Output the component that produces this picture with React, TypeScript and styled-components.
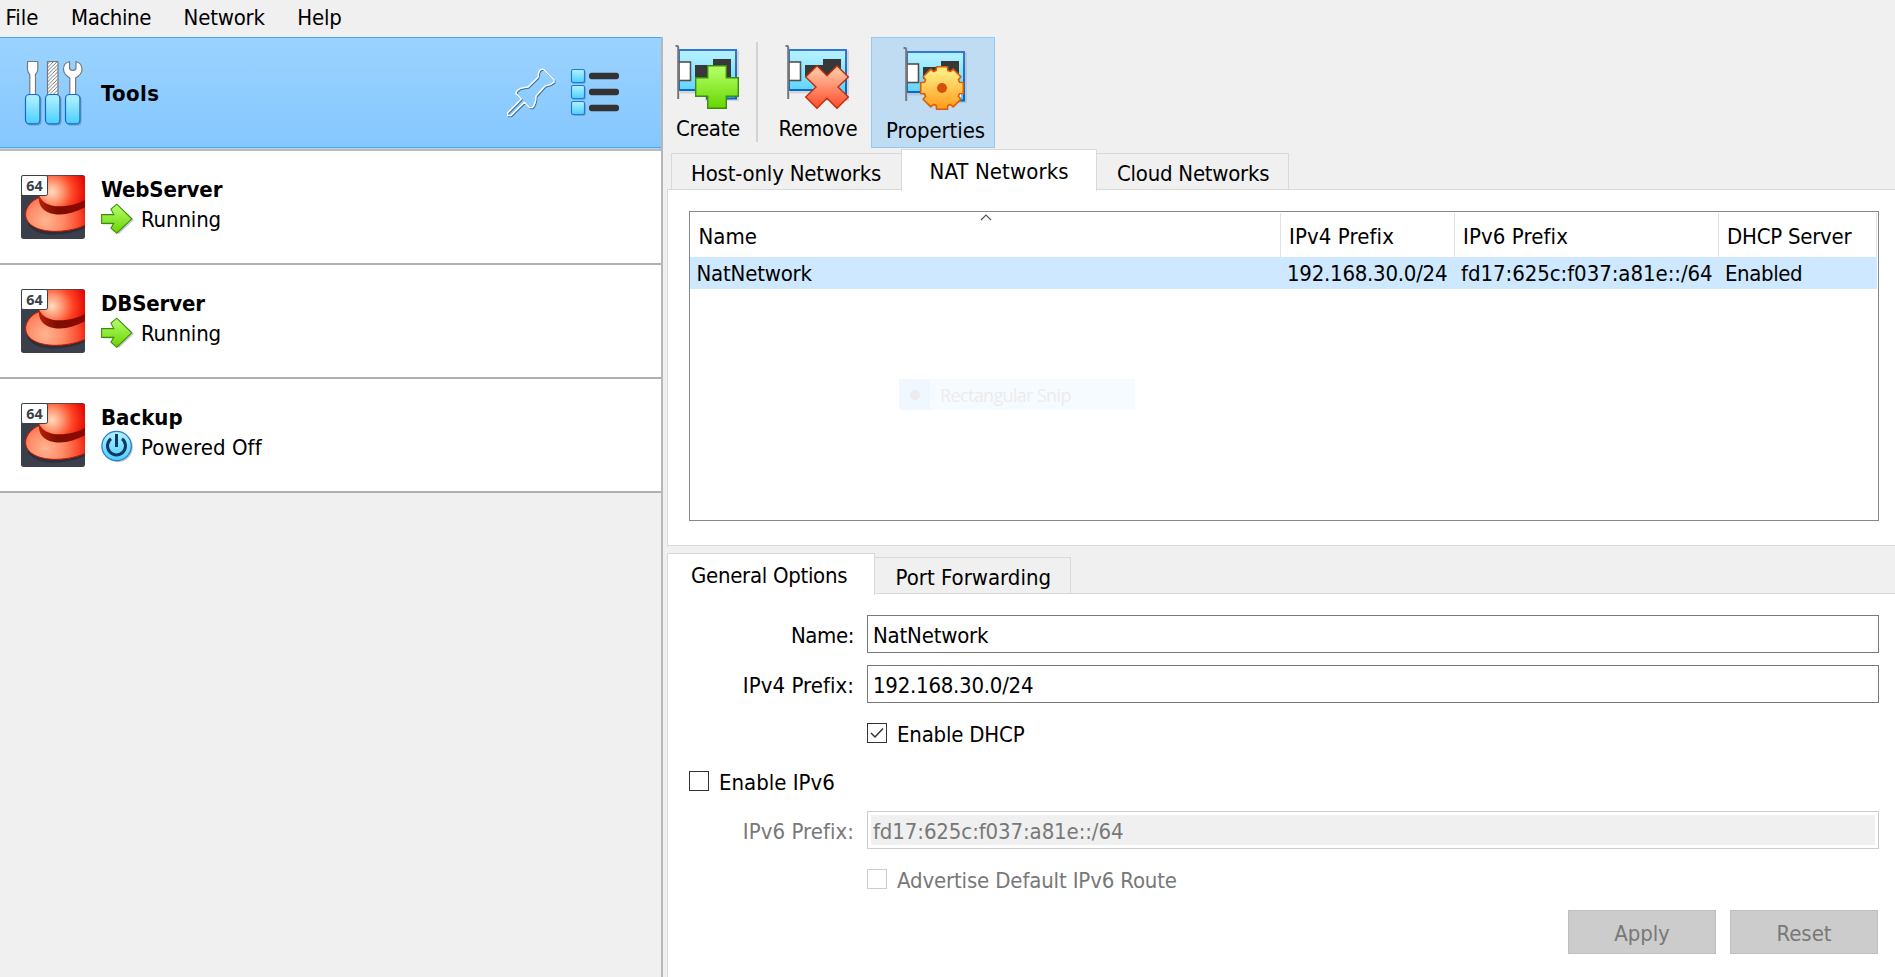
import React from "react";
import styled, { createGlobalStyle, css } from "styled-components";

const GlobalStyle = createGlobalStyle`
  * { box-sizing: border-box; }
  body {
    margin: 0;
    overflow: hidden;
    background: #f0f0f0;
    color: #000;
    font-family: "DejaVu Sans Condensed", "DejaVu Sans", sans-serif;
    font-size: 22px;
    line-height: 26px;
  }
`;

const Text = styled.span<{ $track?: number }>`
  white-space: nowrap;
  letter-spacing: ${(p) => p.$track ?? 0}px;
`;

const Window = styled.div`
  width: 1895px;
  height: 977px;
  display: flex;
  flex-direction: column;
`;

const MenuBar = styled.nav`
  display: flex;
  flex: none;
  gap: 32.5px;
  height: 37px;
  padding: 5px 0 0 5.5px;
`;

const Body = styled.div`
  display: grid;
  grid-template-columns: 661px 2px minmax(0, 1fr);
  flex: 1;
  min-height: 0;
`;

const Divider = styled.div`
  background: #b7b7b7;
`;

const Sidebar = styled.aside`
  display: flex;
  flex-direction: column;
`;

const ToolsRow = styled.div`
  display: flex;
  align-items: center;
  height: 111px;
  padding: 0 41px 0 23px;
  border: solid #46a6f6;
  border-width: 1px 0;
  background: linear-gradient(#9bd3ff, #84c7ff);
`;

const ToolsEdge = styled.div`
  height: 3px;
  border-top: 1px solid #b5d4ee;
  background: #b9b9b9;
`;

const ToolsLabel = styled(Text)`
  flex: 1;
  margin-left: 16px;
  padding-top: 2px;
  font-weight: bold;
`;

const ToolButtons = styled.div`
  display: flex;
  align-items: center;
  gap: 13px;
`;

const MachineRow = styled.div`
  display: flex;
  gap: 16px;
  height: 114px;
  padding: 24px 0 0 21px;
  background: #fff;
  border-bottom: 2px solid #b0b0b0;
`;

const MachineInfo = styled.div`
  display: flex;
  flex-direction: column;
  padding-top: 2px;
`;

const MachineName = styled(Text)`
  font-weight: bold;
  line-height: 26px;
`;

const MachineState = styled.div`
  display: flex;
  align-items: center;
  gap: 6px;
  height: 32px;
`;

const StateText = styled(Text)`
  padding-top: 2px;
`;

const Main = styled.main`
  display: flex;
  flex-direction: column;
  min-width: 0;
  padding-left: 4px;
`;

const Toolbar = styled.div`
  display: flex;
  align-items: flex-start;
  flex: none;
  height: 112px;
  padding-left: 8px;
`;

const ToolButton = styled.button<{ $width: number; $active?: boolean }>`
  display: flex;
  flex-direction: column;
  align-items: center;
  gap: 5px;
  width: ${(p) => p.$width}px;
  height: 111px;
  padding: 8px 0 0;
  border: 0;
  background: none;
  color: inherit;
  font: inherit;
  & > span {
    margin-left: 2px;
  }
  ${(p) =>
    p.$active &&
    css`
      margin-left: 14px;
      padding: 9px 0 0 3px;
      border: 1px solid #91c9f7;
      background: #c0dcf3;
    `}
`;

const ToolSeparator = styled.div`
  width: 2px;
  height: 100px;
  margin: 5px 19px 0 17px;
  background: #d2d2d2;
`;

const TabBar = styled.div<{ $indent?: number }>`
  display: flex;
  align-items: flex-end;
  flex: none;
  height: 40px;
  padding-left: ${(p) => p.$indent ?? 0}px;
`;

const Tab = styled.div<{ $width: number; $pad: number; $side?: "left" | "right"; $selected?: boolean }>`
  width: ${(p) => p.$width}px;
  height: 36px;
  padding: 7px 0 0 ${(p) => p.$pad}px;
  border: solid #d9d9d9;
  border-width: ${(p) => (p.$side === "left" ? "1px 0 0 1px" : "1px 1px 0 0")};
  ${(p) =>
    p.$selected &&
    css`
      z-index: 1;
      height: 42px;
      margin-bottom: -2px;
      padding-top: 9px;
      border-width: 1px 1px 0;
      background: #fff;
    `}
`;

const Pane = styled.section`
  border: solid #d9d9d9;
  border-width: 1px 0 1px 1px;
  background: #fff;
`;

const ListPane = styled(Pane)`
  flex: none;
  height: 357px;
  margin-bottom: 7px;
  padding: 21px 16px 0 21px;
`;

const Table = styled.div`
  position: relative;
  height: 310px;
  border: 1px solid #828790;
`;

const gridColumns = css`
  display: grid;
  grid-template-columns: 591px 174px 264px 158px;
`;

const TableHead = styled.div`
  ${gridColumns}
  height: 45px;
  padding-top: 1px;
`;

const HeadCell = styled.div<{ $pad?: number }>`
  padding: 11px 0 0 ${(p) => p.$pad ?? 8}px;
  border-right: 1px solid #e2e2e2;
`;

const TableRow = styled.div`
  ${gridColumns}
  width: 1187px;
  height: 32px;
  padding-top: 4px;
  background: #cde8ff;
`;

const Cell = styled.div<{ $pad?: number }>`
  padding-left: ${(p) => p.$pad ?? 6}px;
`;

const SortMark = styled.svg`
  position: absolute;
  left: 290px;
  top: 2px;
`;

const SnipHint = styled.div`
  position: absolute;
  left: 209px;
  top: 167px;
  display: flex;
  align-items: center;
  width: 236px;
  height: 31px;
  background: #f6fbff;
  color: #ececec;
  font: 18px "Open Sans", sans-serif;
`;

const SnipMark = styled.div`
  display: flex;
  align-items: center;
  justify-content: center;
  width: 31px;
  height: 31px;
  margin-right: 10px;
  background: #f0f7ff;
`;

const SnipDot = styled.i`
  width: 10px;
  height: 10px;
  border-radius: 50%;
  background: #ececec;
`;

const FormPane = styled(Pane)`
  flex: 1;
  padding: 21px 16px 0 21px;
  border-bottom: 0;
`;

const Form = styled.div`
  display: grid;
  grid-template-columns: 164px minmax(0, 1fr);
  grid-template-rows: 38px 38px 36px 36px 38px 36px 45px;
  gap: 12px 14px;
`;

const Label = styled.label<{ $muted?: boolean }>`
  padding: 8px 0 0;
  margin-right: -1px;
  text-align: right;
  color: ${(p) => (p.$muted ? "#787878" : "#000")};
`;

const Field = styled.div<{ $disabled?: boolean }>`
  padding: 7px 0 0 5px;
  border: 1px solid #7a7a7a;
  ${(p) =>
    p.$disabled &&
    css`
      border-color: #cccccc;
      outline: 3px solid #fff;
      outline-offset: -4px;
      background: #f0f0f0;
      color: #787878;
    `}
`;

const Check = styled.div<{ $wide?: boolean; $muted?: boolean }>`
  display: flex;
  align-items: center;
  gap: 10px;
  grid-column: ${(p) => (p.$wide ? "1 / -1" : "2")};
  color: ${(p) => (p.$muted ? "#787878" : "#000")};
`;

const CheckBox = styled.span<{ $muted?: boolean }>`
  display: flex;
  align-items: center;
  justify-content: center;
  width: 20px;
  height: 20px;
  border: 1px solid ${(p) => (p.$muted ? "#cccccc" : "#333")};
`;

const CheckText = styled(Text)`
  padding-top: 4px;
`;

const Actions = styled.div`
  display: flex;
  justify-content: flex-end;
  gap: 14px;
  grid-column: 1 / -1;
  padding: 1px 1px 0 0;
`;

const ActionButton = styled.button`
  width: 148px;
  height: 44px;
  padding: 4px 0 0;
  border: 1px solid #bfbfbf;
  background: #cccccc;
  color: #787878;
  font: inherit;
`;

function ToolsIcon() {
  return (
    <svg width="62" height="68" viewBox="23 59 62 68">
      <defs>
        <linearGradient id="handle" x1="0" y1="0" x2="0" y2="1">
          <stop offset="0.15" stopColor="#a6eeff" />
          <stop offset="1" stopColor="#4cceff" />
        </linearGradient>
        <pattern id="hatch" width="3.6" height="3.6" patternUnits="userSpaceOnUse">
          <rect width="3.6" height="3.6" fill="#fff" />
          <path d="M-1 1L1 -1M0 3.6L3.6 0M2.6 4.6L4.6 2.6" stroke="#555" strokeWidth="0.8" />
        </pattern>
      </defs>
      <g fill="#5a7d9c" opacity="0.55">
        <rect x="26.5" y="95.5" width="15" height="30" rx="4" />
        <rect x="46.5" y="95.5" width="15" height="30" rx="4" />
        <rect x="66.5" y="95.5" width="15" height="30" rx="4" />
      </g>
      <g stroke="#77797c" strokeWidth="1.2" strokeLinejoin="round">
        <path fill="#fff" d="M27.5 61.5H37.8V69.5Q37.3 73 35.5 74.5V95H29.8V74.5Q28 73 27.5 69.5Z" />
        <rect fill="url(#hatch)" x="47.5" y="61.5" width="10.5" height="34" />
        <path
          fill="#fff"
          d="M69.5 61.5Q63.3 63 63.5 69.5Q63.8 74.5 69.8 78V95H75.6V78Q81.8 74.5 82 69.5Q82 63 76 61.5V68Q75.8 70.3 72.8 70.3Q69.7 70.3 69.5 68Z"
        />
      </g>
      <g fill="url(#handle)" stroke="#1768cc" strokeWidth="1.2">
        <rect x="25.5" y="94.5" width="14.4" height="29.4" rx="4" />
        <rect x="45.5" y="94.5" width="14.4" height="29.4" rx="4" />
        <rect x="65.5" y="94.5" width="14.4" height="29.4" rx="4" />
      </g>
    </svg>
  );
}

const pinPath =
  "M83 257V248L124 207L108 191Q108 182 120 176Q134 172 144 171L174 142Q175 122 183 118H190L222 150V157Q212 166 195 168L168 198Q168 220 157 233H149L133 217L92 257Z";

function PinIcon() {
  return (
    <svg width="52" height="52" viewBox="75 111 156 156" fill="none" strokeLinejoin="round">
      <path d={pinPath} stroke="#44739c" strokeWidth="4" transform="translate(2.5 3)" />
      <path d={pinPath} stroke="#fff" strokeWidth="4.2" />
    </svg>
  );
}

function ListIcon() {
  return (
    <svg width="50" height="49" viewBox="270 117 150 147">
      {[0, 48, 96].map((dy) => (
        <g key={dy} transform={`translate(0 ${dy})`}>
          <rect x="277" y="124" width="40" height="40" rx="5" fill="#5a7d9c" opacity="0.6" />
          <rect x="274.5" y="121.5" width="39" height="39" rx="5" fill="url(#handle)" stroke="#2279d8" strokeWidth="3.4" />
          <rect x="327" y="131.5" width="90" height="19" rx="8" fill="#333" />
        </g>
      ))}
    </svg>
  );
}

function HatIcon() {
  return (
    <svg width="64" height="64" viewBox="15 15 192 192">
      <defs>
        <radialGradient id="crown" gradientUnits="userSpaceOnUse" cx="108" cy="66" r="100">
          <stop offset="0" stopColor="#ffdcc0" />
          <stop offset="0.3" stopColor="#ff9a74" />
          <stop offset="0.62" stopColor="#ff4526" />
          <stop offset="1" stopColor="#e60c06" />
        </radialGradient>
        <radialGradient id="brim" gradientUnits="userSpaceOnUse" cx="88" cy="152" r="135">
          <stop offset="0" stopColor="#ffb490" />
          <stop offset="0.4" stopColor="#ff8a66" />
          <stop offset="0.75" stopColor="#fb4a2e" />
          <stop offset="1" stopColor="#e60c06" />
        </radialGradient>
        <linearGradient id="band" x1="0" y1="0" x2="1" y2="0">
          <stop offset="0" stopColor="#b62008" />
          <stop offset="0.4" stopColor="#7c0d00" />
          <stop offset="1" stopColor="#8d0a00" />
        </linearGradient>
        <clipPath id="tile">
          <rect x="15" y="15" width="192" height="192" rx="8" />
        </clipPath>
      </defs>
      <g clipPath="url(#tile)">
        <rect x="15" y="15" width="192" height="192" fill="#3a3f4b" />
        <path d="M34 160C50 190 90 197 130 193C165 190 190 182 207 174V150Z" fill="#262a33" opacity="0.7" />
        <path
          d="M72 82C42 92 26 118 29 138C34 170 75 185 122 184C162 183 190 174 212 164V84Z"
          fill="url(#brim)"
          stroke="#b81806"
          strokeWidth="3"
        />
        <path d="M69 84C74 62 83 38 92 17H207V98C180 114 145 117 118 112C94 108 78 98 69 84Z" fill="url(#crown)" />
        <path d="M69 78C80 98 100 109 130 109C160 109 188 101 207 90V112C175 130 142 137 113 132C85 128 65 108 69 78Z" fill="url(#band)" />
      </g>
      <rect x="16.5" y="16.5" width="78" height="60" rx="5" fill="#fff" stroke="#3a3f4b" strokeWidth="3" />
      <text x="31" y="63" fontFamily="Noto Sans, sans-serif" fontWeight="bold" fontSize="43" fill="#3a3f4b">
        64
      </text>
    </svg>
  );
}

function RunningIcon() {
  return (
    <svg width="34" height="32" viewBox="0 0 34 32">
      <defs>
        <linearGradient id="go" x1="0" y1="0" x2="0" y2="1">
          <stop offset="0" stopColor="#b6ff6e" />
          <stop offset="1" stopColor="#69d400" />
        </linearGradient>
      </defs>
      <path d="M2 12.5H15L12 8L18 3L33 17L18 31L12 26L15 21.5H2Z" fill="#999" opacity="0.5" />
      <path
        d="M0.6 11.6H12.8L9.9 6.2L15.8 1.2L30.8 15.8L15.8 30.2L9.9 25.2L12.8 20.4H0.6Z"
        fill="url(#go)"
        stroke="#3f8a12"
        strokeWidth="1.1"
      />
    </svg>
  );
}

function PoweredOffIcon() {
  return (
    <svg width="34" height="34" viewBox="0 0 34 34">
      <circle cx="16.8" cy="17.2" r="15" fill="#888" opacity="0.5" />
      <circle cx="15.6" cy="16" r="14.7" fill="url(#handle)" stroke="#2b7bd6" strokeWidth="1.3" />
      <path d="M10 8.8A9 9 0 1 0 21 8.8" fill="none" stroke="#0d3a66" strokeWidth="3" />
      <path d="M15.5 4V17" stroke="#0d3a66" strokeWidth="3" />
    </svg>
  );
}

type Badge = "plus" | "cross" | "gear";

function gearPath(cx: number, cy: number) {
  const points: string[] = [];
  for (let i = 0; i < 8; i++) {
    const base = (i * Math.PI) / 4;
    for (const [offset, radius] of [
      [-0.32, 18.4],
      [-0.25, 22],
      [0.25, 22],
      [0.32, 18.4],
    ]) {
      points.push(
        `${(cx + radius * Math.sin(base + offset)).toFixed(2)},${(cy - radius * Math.cos(base + offset)).toFixed(2)}`
      );
    }
  }
  return `M${points.join("L")}Z`;
}

function CardIcon({ badge }: { badge: Badge }) {
  return (
    <svg width="64" height="66" viewBox="0 0 64 66" overflow="visible">
      <defs>
        <linearGradient id="board" x1="0" y1="0" x2="0" y2="1">
          <stop offset="0.1" stopColor="#b0f0ff" />
          <stop offset="1" stopColor="#4ccfff" />
        </linearGradient>
        <linearGradient id="edge" x1="0" y1="0" x2="0" y2="1">
          <stop offset="0" stopColor="#3376d4" />
          <stop offset="1" stopColor="#0063cf" />
        </linearGradient>
        <linearGradient id="plus" x1="0" y1="0" x2="0" y2="1">
          <stop offset="0.1" stopColor="#b0ff60" />
          <stop offset="1" stopColor="#66d500" />
        </linearGradient>
        <linearGradient id="cross" x1="0" y1="0" x2="0" y2="1">
          <stop offset="0.15" stopColor="#ffbf9e" />
          <stop offset="1" stopColor="#ff4a28" />
        </linearGradient>
        <linearGradient id="gear" x1="0" y1="0" x2="0" y2="1">
          <stop offset="0.15" stopColor="#ffe97e" />
          <stop offset="1" stopColor="#ff9a18" />
        </linearGradient>
      </defs>
      <path d="M5 5.5H64V56H30V48.5H5Z" fill="#999" opacity="0.3" />
      <path d="M4 5H61V53.5H32V45H4Z" fill="url(#board)" stroke="url(#edge)" strokeWidth="2" />
      <path d="M34 45H58V51H34Z" fill="#fff" />
      <path d="M36 45V51M41 45V51M46 45V51M51 45V51" stroke="#e8a200" strokeWidth="3" />
      <path d="M20 20H38V14H56V32H20Z" fill="#383838" />
      <rect x="4" y="17" width="11.5" height="18.5" fill="#fff" stroke="#505050" strokeWidth="1.6" />
      <path d="M0.5 1H2.3Q3.2 1 3.2 3V54" fill="none" stroke="#777" strokeWidth="2" />
      {badge === "plus" && (
        <path
          d="M32.7 20.7H51.3V32.7H63.3V51.3H51.3V63.3H32.7V51.3H20.7V32.7H32.7Z"
          fill="url(#plus)"
          stroke="#3c8a10"
          strokeWidth="1.4"
        />
      )}
      {badge === "cross" && (
        <path
          d="M32 20.7L42 30.7L52 20.7L63.3 32L53 42L63.3 52L52 63.3L42 53.3L32 63.3L20.7 52L31 42L20.7 32Z"
          fill="url(#cross)"
          stroke="#c02e08"
          strokeWidth="1.4"
        />
      )}
      {badge === "gear" && (
        <>
          <path d={gearPath(39, 41)} fill="url(#gear)" stroke="#dd5a08" strokeWidth="1.6" strokeLinejoin="round" />
          <circle cx="39" cy="41" r="5" fill="#d85008" />
        </>
      )}
    </svg>
  );
}

const machines = [
  { name: "WebServer", state: "Running", on: true, track: -0.1 },
  { name: "DBServer", state: "Running", on: true, track: -0.15 },
  { name: "Backup", state: "Powered Off", on: false, track: 0 },
];

export default function App() {
  return (
    <Window>
      <GlobalStyle />
      <MenuBar>
        <Text>File</Text>
        <Text $track={-0.4}>Machine</Text>
        <Text $track={-0.2}>Network</Text>
        <Text $track={-0.2}>Help</Text>
      </MenuBar>
      <Body>
        <Sidebar>
          <ToolsRow>
            <ToolsIcon />
            <ToolsLabel $track={0.4}>Tools</ToolsLabel>
            <ToolButtons>
              <PinIcon />
              <ListIcon />
            </ToolButtons>
          </ToolsRow>
          <ToolsEdge />
          {machines.map((m) => (
            <MachineRow key={m.name}>
              <HatIcon />
              <MachineInfo>
                <MachineName $track={m.track}>{m.name}</MachineName>
                <MachineState>
                  {m.on ? <RunningIcon /> : <PoweredOffIcon />}
                  <StateText $track={m.on ? -0.15 : 0.08}>{m.state}</StateText>
                </MachineState>
              </MachineInfo>
            </MachineRow>
          ))}
        </Sidebar>
        <Divider />
        <Main>
          <Toolbar>
            <ToolButton $width={64}>
              <CardIcon badge="plus" />
              <Text $track={-0.3}>Create</Text>
            </ToolButton>
            <ToolSeparator />
            <ToolButton $width={80}>
              <CardIcon badge="cross" />
              <Text $track={-0.2}>Remove</Text>
            </ToolButton>
            <ToolButton $width={124} $active>
              <CardIcon badge="gear" />
              <Text $track={-0.1}>Properties</Text>
            </ToolButton>
          </Toolbar>
          <TabBar $indent={4}>
            <Tab $width={230} $pad={19} $side="left">
              <Text $track={-0.2}>Host-only Networks</Text>
            </Tab>
            <Tab $width={196} $pad={27.5} $selected>
              <Text $track={0.1}>NAT Networks</Text>
            </Tab>
            <Tab $width={192} $pad={20} $side="right">
              <Text $track={-0.25}>Cloud Networks</Text>
            </Tab>
          </TabBar>
          <ListPane>
            <Table>
              <TableHead>
                <HeadCell $pad={8.5}>
                  <Text>Name</Text>
                </HeadCell>
                <HeadCell>
                  <Text $track={0.1}>IPv4 Prefix</Text>
                </HeadCell>
                <HeadCell>
                  <Text $track={0.1}>IPv6 Prefix</Text>
                </HeadCell>
                <HeadCell>
                  <Text $track={-0.25}>DHCP Server</Text>
                </HeadCell>
              </TableHead>
              <TableRow>
                <Cell $pad={6.5}>
                  <Text $track={-0.2}>NatNetwork</Text>
                </Cell>
                <Cell>
                  <Text $track={-0.25}>192.168.30.0/24</Text>
                </Cell>
                <Cell>
                  <Text $track={-0.05}>fd17:625c:f037:a81e::/64</Text>
                </Cell>
                <Cell>
                  <Text $track={-0.4}>Enabled</Text>
                </Cell>
              </TableRow>
              <SortMark width="12" height="7" viewBox="0 0 12 7">
                <path d="M1 6L6 1L11 6" fill="none" stroke="#555" strokeWidth="1.2" />
              </SortMark>
              <SnipHint>
                <SnipMark>
                  <SnipDot />
                </SnipMark>
                <Text $track={-0.65}>Rectangular Snip</Text>
              </SnipHint>
            </Table>
          </ListPane>
          <TabBar>
            <Tab $width={208} $pad={23} $selected>
              <Text $track={-0.3}>General Options</Text>
            </Tab>
            <Tab $width={196} $pad={20.5} $side="right">
              <Text>Port Forwarding</Text>
            </Tab>
          </TabBar>
          <FormPane>
            <Form>
              <Label>
                <Text $track={-0.4}>Name:</Text>
              </Label>
              <Field>
                <Text $track={-0.2}>NatNetwork</Text>
              </Field>
              <Label>
                <Text $track={0.05}>IPv4 Prefix:</Text>
              </Label>
              <Field>
                <Text $track={-0.25}>192.168.30.0/24</Text>
              </Field>
              <Check>
                <CheckBox>
                  <svg width="16" height="16" viewBox="0 0 16 16">
                    <path d="M2 8L6 12L14 3.5" fill="none" stroke="#333" strokeWidth="1.5" />
                  </svg>
                </CheckBox>
                <CheckText $track={-0.2}>Enable DHCP</CheckText>
              </Check>
              <Check $wide>
                <CheckBox />
                <CheckText>Enable IPv6</CheckText>
              </Check>
              <Label $muted>
                <Text $track={0.05}>IPv6 Prefix:</Text>
              </Label>
              <Field $disabled>
                <Text $track={-0.1}>fd17:625c:f037:a81e::/64</Text>
              </Field>
              <Check $muted>
                <CheckBox $muted />
                <CheckText $track={-0.15}>Advertise Default IPv6 Route</CheckText>
              </Check>
              <Actions>
                <ActionButton>
                  <Text $track={-0.1}>Apply</Text>
                </ActionButton>
                <ActionButton>
                  <Text>Reset</Text>
                </ActionButton>
              </Actions>
            </Form>
          </FormPane>
        </Main>
      </Body>
    </Window>
  );
}
